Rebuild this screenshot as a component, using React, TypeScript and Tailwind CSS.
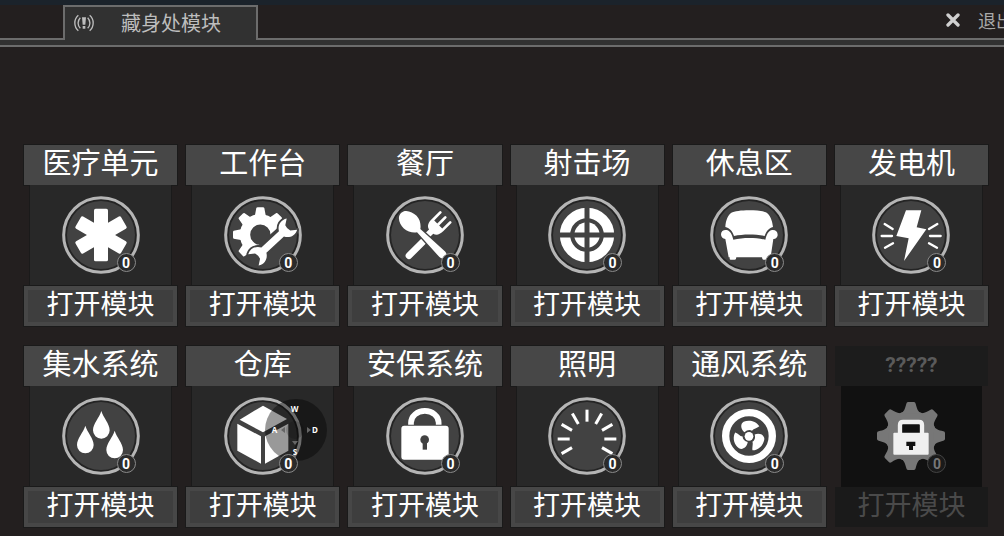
import type { ReactNode } from 'react'

const FACE = '#424242'

function Drop({ x, y }: { x: number; y: number }) {
  return (
    <path
      transform={`translate(${x} ${y})`}
      d="M0 0C6 20 25 38 25 58A25 25 0 0 1 -25 58C-25 38 -6 20 0 0Z"
    />
  )
}

function MedIcon() {
  return (
    <>
      {[0, 60, 120].map((a) => (
        <rect key={a} x="96" y="38" width="42" height="158" rx="5" transform={`rotate(${a} 117 117)`} />
      ))}
    </>
  )
}

const TEETH = [0, 45, 90, 135, 180, 225, 270, 315]

function WorkbenchIcon() {
  return (
    <>
      <defs>
        <clipPath id="gear-clip">
          <path d="M0 0H190L178 80L100 150L78 210H0Z" />
        </clipPath>
      </defs>
      <g clipPath="url(#gear-clip)">
        {TEETH.map((a) => (
          <path key={a} d="M92 62L97 36Q98 34 101 34H117Q120 34 121 36L126 62Z" transform={`rotate(${a} 109 116)`} />
        ))}
        <circle cx="109" cy="116" r="46" fill="none" stroke="white" strokeWidth="31" />
      </g>
      <g transform="translate(146 138) rotate(-43)" stroke={FACE} strokeWidth="11" strokeLinejoin="round" paintOrder="stroke">
        <path d="M-79 -23C-62 -33 -44 -26 -36 -11L36 -11C44 -26 62 -33 79 -23L62 -11Q58 0 62 11L79 23C62 33 44 26 36 11L-36 11C-44 26 -62 33 -79 23L-62 11Q-58 0 -62 -11Z" />
      </g>
    </>
  )
}

function DiningIcon() {
  return (
    <>
      <path d="M69 179L112 136" stroke="white" strokeWidth="20" strokeLinecap="round" />
      <g transform="translate(151 91) rotate(45)">
        <path d="M-25 -38V-4C-25 14 -17 20 -9 22V46H9V22C17 20 25 14 25 -4V-38Q25 -42 21 -42T17 -38V-8H4V-38Q4 -42 0 -42T-4 -38V-8H-17V-38Q-17 -42 -21 -42T-25 -38Z" />
      </g>
      <g transform="translate(74 80) rotate(-45)" stroke={FACE} strokeWidth="8" paintOrder="stroke">
        <path d="M0 -41C18 -41 27 -20 27 -2C27 14 16 28 7 34L12 134Q12 146 0 146T-12 134L-7 34C-16 28 -27 14 -27 -2C-27 -20 -18 -41 0 -41Z" />
      </g>
    </>
  )
}

function TargetIcon() {
  return (
    <>
      <circle cx="117" cy="117" r="66" fill="none" stroke="white" strokeWidth="31" />
      <circle cx="117" cy="117" r="38" />
      <path d="M117 30V204M30 117H204" stroke={FACE} strokeWidth="15" />
    </>
  )
}

function SofaIcon() {
  return (
    <>
      <path d="M46 93C47 73 54 57 64 50C80 40 154 40 170 50C180 57 187 73 189 93C176 96 168 107 164 120C135 114 99 114 72 120C68 107 60 96 46 93Z" />
      <path d="M33 115C33 105 41 101 49 102C61 103 66 116 70 131C100 124 135 124 166 131C170 116 175 103 187 102C196 101 203 107 203 116C203 124 196 129 190 129L182 183H179V188Q179 191 176 191H161Q158 191 157 188L156 184H79L78 188Q77 191 74 191H62Q59 191 59 188V184H56L46 129C38 128 33 123 33 115Z" />
    </>
  )
}

function PowerIcon() {
  return (
    <>
      <path d="M102 43H148L134 94L163 100L96 195L110 127L73 120Z" />
      <path
        d="M38 84L62 99M29 120H60M39 155L63 142M196 84L171 99M174 120H206M171 142L195 155"
        stroke="white"
        strokeWidth="7"
        strokeLinecap="round"
      />
    </>
  )
}

function WaterIcon() {
  return (
    <>
      <Drop x={118} y={42} />
      <Drop x={70} y={86} />
      <Drop x={158} y={101} />
    </>
  )
}

function StorageIcon() {
  return (
    <>
      <path d="M117 26L189 66L117 106L47 68Z" />
      <path d="M40 80L111 118V200L40 161Z" />
      <path d="M123 118L193 80V161L123 200Z" />
    </>
  )
}

function SecurityIcon() {
  return (
    <>
      <path d="M75 83V77A41 35 0 0 1 158 77V83" fill="none" stroke="white" strokeWidth="17" />
      <rect x="46" y="86" width="142" height="102" rx="9" />
      <circle cx="116" cy="128" r="13" fill={FACE} />
      <path d="M110 130H123V158H110Z" fill={FACE} />
    </>
  )
}

function LightIcon() {
  return (
    <>
      {[-120, -90, -60, -30, 0, 30, 60, 90, 120].map((a) => (
        <path key={a} d="M117 38V74" stroke="white" strokeWidth="9" transform={`rotate(${a} 117 126)`} />
      ))}
    </>
  )
}

function FanIcon() {
  return (
    <>
      <circle cx="117" cy="117" r="70" fill="none" stroke="white" strokeWidth="22" />
      {[0, 120, 240].map((a) => (
        <path key={a} d="M104 106C92 97 90 80 101 74C115 68 137 70 148 88C140 95 132 94 126 101C119 97 110 99 104 106Z" transform={`rotate(${a} 117 118)`} />
      ))}
      <circle cx="117" cy="118" r="13" />
    </>
  )
}

function UnknownIcon() {
  return (
    <>
      <g fill="#777777">
        <circle cx="117" cy="117" r="76" />
        {TEETH.map((a) => (
          <path key={a} d="M84 50C97 45 99 34 103 20Q104 15 108 15H126Q130 15 131 20C135 34 137 45 150 50Z" transform={`rotate(${a} 117 117)`} />
        ))}
      </g>
      <path d="M84 110V84Q84 75 93 75H141Q150 75 150 84V110" fill="#111111" stroke="#f0f0f0" strokeWidth="13" />
      <rect x="64" y="107" width="106" height="66" rx="3" fill="#f0f0f0" />
      <path d="M103 134H130V147H123V159H111V147H103Z" fill="#111111" />
    </>
  )
}

interface Module {
  name: string
  icon: ReactNode
  locked?: boolean
  stick?: boolean
}

const modules: Module[] = [
  { name: '医疗单元', icon: <MedIcon /> },
  { name: '工作台', icon: <WorkbenchIcon /> },
  { name: '餐厅', icon: <DiningIcon /> },
  { name: '射击场', icon: <TargetIcon /> },
  { name: '休息区', icon: <SofaIcon /> },
  { name: '发电机', icon: <PowerIcon /> },
  { name: '集水系统', icon: <WaterIcon /> },
  { name: '仓库', icon: <StorageIcon />, stick: true },
  { name: '安保系统', icon: <SecurityIcon /> },
  { name: '照明', icon: <LightIcon /> },
  { name: '通风系统', icon: <FanIcon /> },
  { name: '?????', icon: <UnknownIcon />, locked: true },
]

function StickOverlay() {
  return (
    <div className='pointer-events-none absolute top-[2px] left-[41px] h-[62px] w-[62px] rounded-full bg-black/40 font-["Noto_Sans",sans-serif] text-[8px] leading-none font-bold text-white'>
      <svg viewBox="0 0 62 62" className="absolute inset-0 h-full w-full" fill="#666666" aria-hidden="true">
        <circle cx="30" cy="31" r="9" fill="black" fillOpacity="0.15" />
        <path d="M42 28L46 31L42 34ZM20 28L16 31L20 34ZM27 42H33L30 46Z" />
      </svg>
      <span className="absolute top-[6px] left-[26px]">W</span>
      <span className="absolute top-[27px] left-[7px]">A</span>
      <span className="absolute top-[27px] right-[9px]">D</span>
      <span className="absolute bottom-[5px] left-[28px]">S</span>
    </div>
  )
}

function ModuleCard({ name, icon, locked, stick }: Module) {
  return (
    <section className="flex flex-col">
      <h2
        className={
          locked
            ? 'flex h-10 items-center justify-center bg-[#1c1c1c] font-["Roboto","Noto_Sans_CJK_SC",sans-serif] text-[21px] font-bold text-[#5a5a5a]'
            : 'flex h-10 items-center justify-center bg-[#474747] pb-2 text-[29px] leading-none text-white outline outline-[#1a1a1a]'
        }
      >
        {name}
      </h2>
      <div
        className={
          locked
            ? 'mx-[6px] flex h-[101px] items-center justify-center bg-[#111111] pb-px'
            : 'mx-[5px] flex h-[101px] items-center justify-center border-x border-[#1a1a1a] bg-[#282828] pb-px'
        }
      >
        <div className="relative h-[78px] w-[78px]">
          <svg viewBox="0 0 234 234" className="h-full w-full" fill="white" aria-hidden="true">
            {!locked && (
              <>
                <circle cx="117" cy="117" r="112" fill="#242424" stroke="#b5b5b5" strokeWidth="9" />
                <circle cx="117" cy="117" r="102" fill={FACE} />
              </>
            )}
            {icon}
          </svg>
          {stick && <StickOverlay />}
          <span
            className={
              locked
                ? 'absolute right-1 bottom-[2px] flex h-[19px] w-[19px] items-center justify-center rounded-full border border-[#444444] bg-[#1a1a1a] font-["Roboto",sans-serif] text-[14px] leading-none font-bold text-[#777777]'
                : 'absolute right-1 bottom-[2px] flex h-[19px] w-[19px] items-center justify-center rounded-full border border-[#8a8a8a] bg-[#2b2b2b] font-["Roboto",sans-serif] text-[14px] leading-none font-bold text-white'
            }
          >
            0
          </span>
        </div>
      </div>
      <button
        type="button"
        disabled={locked}
        className={
          locked
            ? 'flex h-10 items-center justify-center bg-[#1a1a1a] pb-2 text-[27px] leading-none text-[#4a4a4a]'
            : 'flex h-10 items-center justify-center border-4 border-[#474747] bg-[#3e3e3e] pb-2 text-[27px] leading-none text-white outline outline-[#1a1a1a]'
        }
      >
        打开模块
      </button>
    </section>
  )
}

export default function App() {
  return (
    <div className='min-h-screen overflow-hidden bg-[#231f1f] font-["Noto_Sans_CJK_SC",sans-serif]'>
      <header className="border-t-[5px] border-[#1b232b]">
        <div className="flex h-[35px] items-stretch">
          <div className="w-[63px] border-b-2 border-[#6c6c6c]" />
          <div className="flex w-[195px] items-center border-2 border-b-0 border-[#6c6c6c] bg-[#313131] pb-[2px] pl-[9px] text-[#bdbdbd]">
            <svg viewBox="0 0 60 54" className="h-[18px] w-5" fill="none" stroke="currentColor" strokeWidth="4" aria-hidden="true">
              <path d="M13 4C-1 16 -1 38 13 50M19 11C10 20 10 34 19 43M47 4C61 16 61 38 47 50M41 11C50 20 50 34 41 43" />
              <path d="M24 10H36L34 32H26ZM26 36H34V44H26Z" fill="currentColor" stroke="none" />
            </svg>
            <h1 className="ml-[27px] text-[20px] leading-none whitespace-nowrap">藏身处模块</h1>
          </div>
          <div className="flex flex-1 items-center justify-end border-b-2 border-[#6c6c6c] pb-1">
            <button type="button" className="-mr-[10px] flex shrink-0 items-center gap-[18px] text-[18px] leading-none text-[#a8a8a8]">
              <svg viewBox="0 0 42 42" className="h-[14px] w-[14px]" aria-hidden="true">
                <path d="M6 6L36 36M36 6L6 36" stroke="#d0d0d0" strokeWidth="10" strokeLinecap="round" />
              </svg>
              退出
            </button>
          </div>
        </div>
        <div className="h-[7px] border-b-2 border-[#6c6c6c] bg-[#313131]" />
      </header>
      <main className="grid grid-cols-6 gap-x-[9px] gap-y-5 pt-[98px] pr-4 pb-[9px] pl-6">
        {modules.map((m) => (
          <ModuleCard key={m.name} {...m} />
        ))}
      </main>
    </div>
  )
}
